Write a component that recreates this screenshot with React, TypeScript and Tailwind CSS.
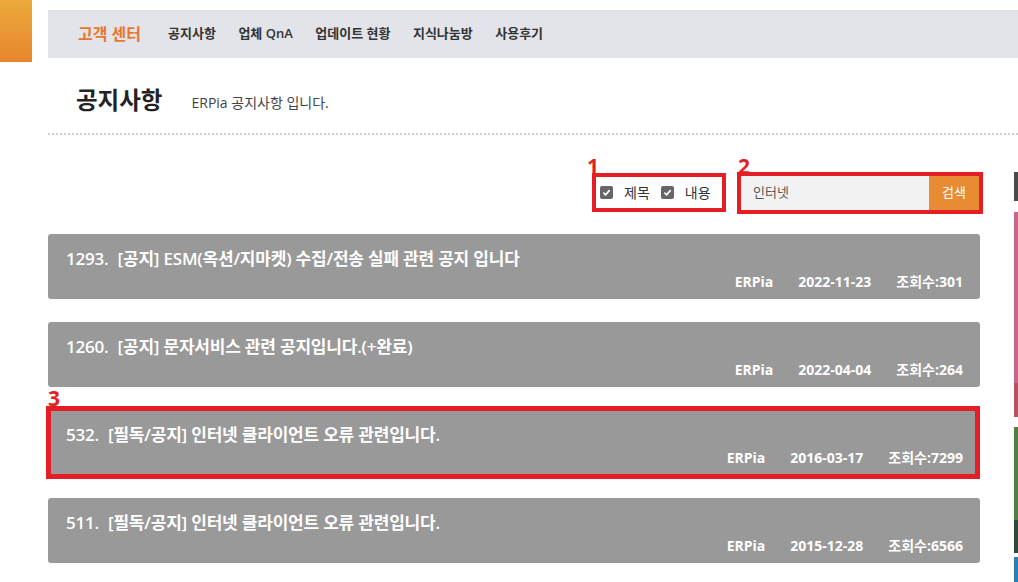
import React from "react";

const navItems = ["공지사항", "업체 QnA", "업데이트 현황", "지식나눔방", "사용후기"];

const notices = [
  { no: 1293, title: "[공지] ESM(옥션/지마켓) 수집/전송 실패 관련 공지 입니다", date: "2022-11-23", views: 301 },
  { no: 1260, title: "[공지] 문자서비스 관련 공지입니다.(+완료)", date: "2022-04-04", views: 264 },
  { no: 532, title: "[필독/공지] 인터넷 클라이언트 오류 관련입니다.", date: "2016-03-17", views: 7299, marked: true },
  { no: 511, title: "[필독/공지] 인터넷 클라이언트 오류 관련입니다.", date: "2015-12-28", views: 6566 },
];

const strips = [
  "h-[29px] bg-[#4a4a4a] mb-[11px]",
  "h-[171px] bg-[#c4688c]",
  "h-[34px] bg-[#b9525f] mb-[10px]",
  "h-[93px] bg-[#4f7e40]",
  "h-[33px] bg-[#2f4a38] mb-[4px]",
  "h-[30px] bg-[#2f7db3]",
];

const CheckBox = () => (
  <span className="w-[13px] h-[13px] rounded-[2px] bg-[#666] flex items-center justify-center">
    <svg width="9" height="9" viewBox="0 0 10 10">
      <path d="M1.5 5.2 L4 7.6 L8.5 2.4" stroke="white" strokeWidth="1.9" fill="none" />
    </svg>
  </span>
);

const NoticeRow = ({ n }: { n: (typeof notices)[number] }) => (
  <div className="relative">
    {n.marked && (
      <>
        <span className="absolute left-0 -top-[22px] text-[21px] font-bold text-[#e31e24] leading-none">3</span>
        <div className="absolute -left-[2px] -top-[4px] right-0 -bottom-[4px] border-[5px] border-[#e31e24] z-10" />
      </>
    )}
    <div className="h-[65px] bg-[#999999] rounded-[3px] text-white pl-[18px] pr-[17px] pt-[13px]">
      <div className="text-[17px] font-semibold leading-[24px] tracking-[-0.2px]">
        {n.no}.<span className="ml-[9px]">{n.title}</span>
      </div>
      <div className="flex justify-end gap-[25px] text-[14px] font-bold leading-[18px] mt-[2px]">
        <span>ERPia</span>
        <span>{n.date}</span>
        <span>조회수:{n.views}</span>
      </div>
    </div>
  </div>
);

export default function App() {
  return (
    <div
      className="w-[1018px] h-[582px] overflow-hidden bg-white flex text-[#333]"
      style={{ fontFamily: '"Open Sans", "Noto Sans CJK KR", sans-serif' }}
    >
      <div className="w-[48px] shrink-0">
        <div className="w-[32px] h-[62px] bg-gradient-to-b from-[#ebaa3b] to-[#e8852e]" />
      </div>

      <div className="w-[970px] shrink-0">
        <div className="mt-[10px] h-[48px] bg-[#e3e4e9] flex items-center pl-[30px]">
          <span className="text-[16px] font-bold text-[#e8772e] mr-[27px]">고객 센터</span>
          <div className="flex gap-[22.5px] text-[13px] font-semibold text-[#333]">
            {navItems.map((item) => (
              <span key={item}>{item}</span>
            ))}
          </div>
        </div>

        <div className="h-[77px] flex items-center pl-[28px] pt-[10px] border-b-2 border-dotted border-[#cfcfcf]">
          <h1 className="text-[23.5px] font-bold text-[#222] mr-[29px]">공지사항</h1>
          <span className="text-[14px] text-[#444] mt-[4px]">ERPia 공지사항 입니다.</span>
        </div>

        <div className="flex">
          <div className="w-[935px] shrink-0">
            <div className="mt-[37px] flex justify-end items-start gap-[11px] h-[42px]">
              <div className="relative mt-[1px]">
                <span className="absolute -left-[5px] -top-[17px] text-[21px] font-bold text-[#e31e24] leading-none">1</span>
                <div className="w-[134px] h-[39px] border-[4px] border-[#e31e24] flex items-center pl-[4px] gap-[11px] text-[14px] text-[#333]">
                  <label className="flex items-center gap-[11px]">
                    <CheckBox />
                    제목
                  </label>
                  <label className="flex items-center gap-[11px]">
                    <CheckBox />
                    내용
                  </label>
                </div>
              </div>
              <div className="relative">
                <span className="absolute left-[1px] -top-[16px] text-[21px] font-bold text-[#e31e24] leading-none">2</span>
                <div className="w-[246px] h-[42px] border-[4px] border-[#e31e24] flex">
                  <div className="flex-1 bg-[#f2f2f2] flex items-center pl-[12px] text-[13px] text-[#555]">인터넷</div>
                  <button className="w-[50px] bg-[#e88c33] text-white text-[13px]">검색</button>
                </div>
              </div>
            </div>

            <div className="mt-[20px] w-[932px] flex flex-col gap-[23px]">
              {notices.map((n) => (
                <NoticeRow key={n.no} n={n} />
              ))}
            </div>
          </div>

          <div className="w-[4px] ml-[31px] mt-[37px] flex flex-col">
            {strips.map((s, i) => (
              <div key={i} className={s} />
            ))}
          </div>
        </div>
      </div>
    </div>
  );
}
